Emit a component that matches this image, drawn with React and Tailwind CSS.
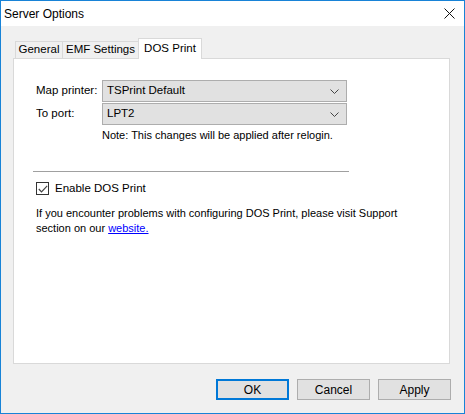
import React from "react";

// Server Options dialog, DOS Print tab (Windows 10 look)

const font = { fontFamily: '"Liberation Sans", Arial, sans-serif' };

function Chevron() {
  return (
    <svg width="9" height="5" viewBox="0 0 9 5" className="shrink-0">
      <path d="M0.5 0.5 L4.5 4.5 L8.5 0.5" fill="none" stroke="#444" strokeWidth="1" />
    </svg>
  );
}

function Combo({ value }) {
  return (
    <div className="flex h-[22px] w-[245px] items-center justify-between border border-[#adadad] bg-[#e1e1e1] pl-[4px] pr-[7px]">
      <span className="text-[11.5px] text-black">{value}</span>
      <Chevron />
    </div>
  );
}

function Tab({ label, active, width }) {
  if (active) {
    return (
      <div
        className={`relative z-10 -mb-px flex h-[21px] items-center justify-center border border-b-0 border-[#d9d9d9] bg-white text-[11.5px] ${width}`}
      >
        {label}
      </div>
    );
  }
  return (
    <div
      className={`-mr-px flex h-[17px] items-center justify-center border border-b-0 border-[#d9d9d9] bg-[#f0f0f0] text-[11.5px] ${width}`}
    >
      {label}
    </div>
  );
}

function Button({ label, primary }) {
  return (
    <button
      type="button"
      className={
        primary
          ? "h-[21px] w-[73px] border-2 border-[#0078d7] bg-[#e1e1e1] text-[12px] text-black"
          : "h-[21px] w-[73px] border border-[#adadad] bg-[#e1e1e1] text-[12px] text-black"
      }
    >
      {label}
    </button>
  );
}

export default function App() {
  return (
    <div
      className="flex h-[414px] w-[465px] flex-col border border-[#1883d7] bg-[#f0f0f0] text-black"
      style={font}
    >
      {/* Title bar */}
      <div className="flex h-[25px] shrink-0 items-center justify-between bg-white pl-[3px] pr-[9px]">
        <span className="text-[12px]">Server Options</span>
        <svg width="11" height="11" viewBox="0 0 11 11">
          <path d="M0.5 0.5 L10.5 10.5 M10.5 0.5 L0.5 10.5" stroke="#111" strokeWidth="1" />
        </svg>
      </div>

      <div className="flex flex-1 flex-col px-[12px]">
        {/* Tab strip */}
        <div className="mt-[12px] flex h-[20px] items-end pl-[2px]">
          <Tab label="General" width="w-[48px]" />
          <Tab label="EMF Settings" width="w-[77px]" />
          <Tab label="DOS Print" width="w-[64px]" active />
        </div>

        {/* Tab panel */}
        <div className="h-[306px] w-[437px] border border-[#d9d9d9] bg-white pl-[19px] pt-[21px] text-[11px]">
          <div className="ml-[3px] grid grid-cols-[66px_245px] items-center gap-y-[1px]">
            <span className="text-[11.5px]">Map printer:</span>
            <Combo value="TSPrint Default" />
            <span className="text-[11.5px]">To port:</span>
            <Combo value="LPT2" />
            <span />
            <span className="mt-[2px] whitespace-nowrap leading-[15px]">
              Note: This changes will be applied after relogin.
            </span>
          </div>

          <div className="mt-[28px] h-px w-[316px] bg-[#a0a0a0]" />

          <label className="ml-[3px] mt-[9px] flex items-center gap-[6px] text-[11.5px] leading-[15px]">
            <span className="flex h-[13px] w-[13px] items-center justify-center border border-[#333] bg-white">
              <svg width="10" height="8" viewBox="0 0 10 8">
                <path d="M0.8 4 L3.5 6.8 L9.2 0.8" fill="none" stroke="#444" strokeWidth="1.2" />
              </svg>
            </span>
            Enable DOS Print
          </label>

          <p className="ml-[3px] mt-[10px] whitespace-nowrap leading-[15px]">
            If you encounter problems with configuring DOS Print, please visit Support
            <br />
            section on our <span className="text-[#0000ff] underline">website.</span>
          </p>
        </div>

        {/* Buttons */}
        <div className="mt-[15px] flex justify-end gap-[8px] pr-[1px]">
          <Button label="OK" primary />
          <Button label="Cancel" />
          <Button label="Apply" />
        </div>
      </div>
    </div>
  );
}
